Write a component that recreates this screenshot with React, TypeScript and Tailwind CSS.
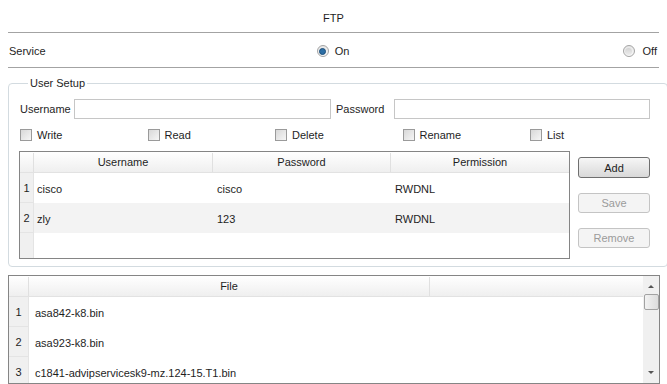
import React from 'react'

const users = [
    { n: 1, user: 'cisco', pass: 'cisco', perm: 'RWDNL' },
    { n: 2, user: 'zly', pass: '123', perm: 'RWDNL' },
]

const files = ['asa842-k8.bin', 'asa923-k8.bin', 'c1841-advipservicesk9-mz.124-15.T1.bin']

function Radio({ checked }: { checked?: boolean }) {
    return (
        <span className="w-[12px] h-[12px] rounded-full border border-[#a4a4a4] bg-linear-to-b from-[#e6e6e6] to-[#fafafa] flex items-center justify-center">
            {checked ? (
                <span className="w-[7px] h-[7px] rounded-full bg-[#2c6ea5] border border-[#1d4f7a]" />
            ) : (
                <span className="w-[7px] h-[7px] rounded-full bg-linear-to-b from-[#d4d4d4] to-[#ececec]" />
            )}
        </span>
    )
}

function Check({ label }: { label: string }) {
    return (
        <div className="w-[127.5px] flex items-center gap-[5px]">
            <span className="w-[12px] h-[12px] border border-[#9a9a9a] bg-linear-to-br from-[#d8d8d8] to-[#f6f6f6]" />
            <span className="pt-[1px]">{label}</span>
        </div>
    )
}

function Btn({ label, disabled }: { label: string; disabled?: boolean }) {
    return (
        <button
            className={
                disabled
                    ? 'h-[20px] w-[72px] pt-[1px] rounded-[3px] border border-[#c4c4c4] bg-[#f4f4f4] text-[#9b9b9b]'
                    : 'h-[21px] w-[72px] pt-[1px] rounded-[3px] border border-[#6f6f6f] bg-linear-to-b from-[#f6f6f6] to-[#d9d9d9] text-[#1e1e1e]'
            }
        >
            {label}
        </button>
    )
}

export default function App() {
    return (
        <div className="w-[667px] h-[384px] overflow-hidden bg-white text-[11px] leading-[13px] text-[#1e1e1e] font-['Liberation_Sans',Arial,sans-serif]">
            {/* title */}
            <div className="h-[32px] pt-[5px] flex items-center justify-center">FTP</div>
            <div className="mx-[8px] border-t border-[#a3a3a3]" />

            {/* service */}
            <div className="h-[34px] pt-[2px] pl-[9px] pr-[10px] grid grid-cols-[1fr_auto_1fr] items-center">
                <span>Service</span>
                <div className="flex items-center gap-[6px]">
                    <Radio checked />
                    <span>On</span>
                </div>
                <div className="flex items-center justify-end gap-[8px]">
                    <Radio />
                    <span>Off</span>
                </div>
            </div>
            <div className="mx-[8px] border-t border-[#a3a3a3]" />

            {/* user setup */}
            <fieldset className="mt-[8px] mx-[8px] w-[652px] border border-[#d3dbe0] rounded-[4px] pl-[11px] pr-[9px] pt-[9px] pb-[7px]">
                <legend className="ml-[8px] px-[2px] leading-[14px]">User Setup</legend>
                <div className="flex items-center h-[20px]">
                    <span className="w-[54px] pt-[1px]">Username</span>
                    <input className="w-[257px] h-[20px] border border-[#c6c6c6] bg-white outline-none" />
                    <span className="ml-[5px] w-[58px] pt-[1px]">Password</span>
                    <input className="w-[256px] h-[20px] border border-[#c6c6c6] bg-white outline-none" />
                </div>
                <div className="flex items-center h-[12px] mt-[10px]">
                    <Check label="Write" />
                    <Check label="Read" />
                    <Check label="Delete" />
                    <Check label="Rename" />
                    <Check label="List" />
                </div>
                <div className="flex mt-[10px] -ml-[1px]">
                    <div className="w-[551px] h-[108px] border border-[#858585] flex flex-col">
                        <div className="h-[21px] pt-[1px] grid grid-cols-[14px_179px_178px_1fr] border-b border-[#e2e2e2] bg-linear-to-b from-[#ffffff] to-[#efefef]">
                            <span className="border-r border-[#e0e0e0]" />
                            <span className="flex items-center justify-center border-r border-[#e0e0e0]">Username</span>
                            <span className="flex items-center justify-center border-r border-[#e0e0e0]">Password</span>
                            <span className="flex items-center justify-center">Permission</span>
                        </div>
                        {users.map((u) => (
                            <div
                                key={u.n}
                                className={
                                    'h-[30px] grid grid-cols-[14px_179px_178px_1fr] ' +
                                    (u.n % 2 === 0 ? 'bg-[#f3f3f3]' : 'bg-white')
                                }
                            >
                                <span className="flex items-center justify-center pt-[2px] bg-[#f0f0f0] border-b border-r border-[#e4e4e4]">{u.n}</span>
                                <span className="flex items-center pt-[2px] pl-[3px]">{u.user}</span>
                                <span className="flex items-center pt-[2px] pl-[4px]">{u.pass}</span>
                                <span className="flex items-center pt-[2px] pl-[4px]">{u.perm}</span>
                            </div>
                        ))}
                        <div className="flex-1 flex">
                            <span className="w-[14px] bg-[#f0f0f0] border-r border-[#e4e4e4]" />
                        </div>
                    </div>
                    <div className="ml-[8px] pt-[6px] flex flex-col gap-[15px]">
                        <Btn label="Add" />
                        <Btn label="Save" disabled />
                        <Btn label="Remove" disabled />
                    </div>
                </div>
            </fieldset>

            {/* files */}
            <div className="mt-[8px] mx-[8px] w-[652px] h-[109px] border border-[#858585] flex">
                <div className="flex-1 min-h-0 overflow-hidden flex flex-col">
                    <div className="h-[21px] shrink-0 pt-[1px] grid grid-cols-[20px_401px_1fr] border-b border-[#e2e2e2] bg-linear-to-b from-[#ffffff] to-[#efefef]">
                        <span className="border-r border-[#e0e0e0]" />
                        <span className="flex items-center justify-center border-r border-[#e0e0e0]">File</span>
                        <span />
                    </div>
                    {files.map((f, i) => (
                        <div key={f} className="h-[30px] shrink-0 grid grid-cols-[20px_1fr]">
                            <span className="flex items-center justify-center pt-[2px] bg-[#f0f0f0] border-b border-r border-[#e4e4e4]">{i + 1}</span>
                            <span className="flex items-center pt-[2px] pl-[6px]">{f}</span>
                        </div>
                    ))}
                </div>
                <div className="w-[16px] bg-[#f0f0f0] flex flex-col items-center">
                    <svg width="16" height="16" viewBox="0 0 16 16" className="mt-[2px]">
                        <path d="M5 10 L8 7 L11 10 Z" fill="#555" />
                    </svg>
                    <div className="w-[15px] h-[16px] border border-[#a2a2a2] rounded-[2px] bg-linear-to-r from-[#f2f2f2] to-[#dcdcdc]" />
                    <div className="flex-1" />
                    <svg width="16" height="16" viewBox="0 0 16 16" className="mb-[2px]">
                        <path d="M5 6 L8 9 L11 6 Z" fill="#555" />
                    </svg>
                </div>
            </div>
        </div>
    )
}
